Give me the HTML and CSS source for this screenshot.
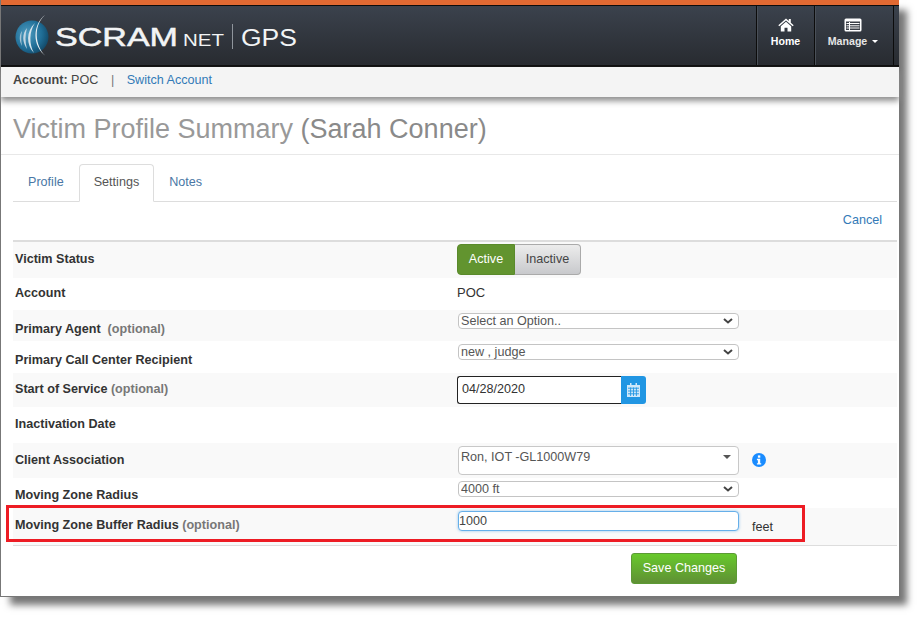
FILE: index.html
```html
<!DOCTYPE html>
<html lang="en">
<head>
<meta charset="utf-8">
<title>Victim Profile Summary</title>
<link rel="stylesheet" href="styles.css">
</head>
<body>
<div class="window">
  <header class="topbar">
    <svg class="logo" width="300" height="60" viewBox="0 0 300 60">
      <defs>
        <radialGradient id="orb" cx="0.35" cy="0.4" r="0.75">
          <stop offset="0" stop-color="#4f9cc0"/>
          <stop offset="0.6" stop-color="#1f6d96"/>
          <stop offset="1" stop-color="#0f3f5c"/>
        </radialGradient>
      </defs>
      <circle cx="32" cy="32" r="16.5" fill="url(#orb)"/>
      <path d="M45 10 C33 19 31 41 47 52 C37 45 31 23 45 10Z" fill="#e8eef2"/>
      <path d="M35 18 C26 26 26 40 34 48 C29 39 29 27 35 18Z" fill="#d6e4ec"/>
      <path d="M27 23 C22 29 22 37 27 44 C25 37 25 30 27 23Z" fill="#c2d6e2"/>
      <path d="M22 26 C19 30 19 36 22 41 C21 36 21 31 22 26Z" fill="#a9c6d6"/>
      <text class="logo-main" x="55" y="41" textLength="123" lengthAdjust="spacingAndGlyphs">SCRAM</text>
      <text class="logo-net" x="183" y="41" textLength="41" lengthAdjust="spacingAndGlyphs">NET</text>
      <rect x="232" y="19" width="1" height="25" fill="#8f959c"/>
      <text class="logo-gps" x="241" y="41" textLength="56" lengthAdjust="spacingAndGlyphs">GPS</text>
    </svg>
    <nav class="mainnav">
      <a class="navitem navhome">
        <svg width="16" height="14" viewBox="0 0 16 14"><path d="M8 0.5 L0.3 7.2 L1.3 8.3 L8 2.5 L14.7 8.3 L15.7 7.2 L12.8 4.7 V1 H10.8 V3 Z" fill="#fff"/><path d="M2.8 8.2 L8 3.8 L13.2 8.2 V13.5 H9.5 V9.8 H6.5 V13.5 H2.8Z" fill="#fff"/></svg>
        <span>Home</span>
      </a>
      <a class="navitem navmanage">
        <svg width="18" height="14" viewBox="0 0 18 14"><rect x="0.5" y="0.5" width="17" height="13" rx="1.5" fill="#fff"/><rect x="2" y="3.5" width="14" height="8.5" fill="#3a3f47"/><path d="M2.5 5.5H15.5M2.5 7.8H15.5M2.5 10H15.5M5.5 4V12" stroke="#fff" stroke-width="1"/></svg>
        <span>Manage <i class="caret"></i></span>
      </a>
    </nav>
  </header>
  <div class="accountbar">
    <b>Account:</b> POC <span class="pipe">|</span> <a>Switch Account</a>
  </div>
  <h1 class="pagetitle">Victim Profile Summary <small>(Sarah Conner)</small></h1>
  <main class="content">
    <ul class="tabs">
      <li><a>Profile</a></li>
      <li class="active"><a>Settings</a></li>
      <li><a>Notes</a></li>
    </ul>
    <div class="cancelrow"><a>Cancel</a></div>
    <div class="formtable">
      <div class="row row-status">
        <label>Victim Status</label>
        <div class="btngroup"><span class="seg seg-on">Active</span><span class="seg seg-off">Inactive</span></div>
      </div>
      <div class="row row-account">
        <label>Account</label>
        <div class="value">POC</div>
      </div>
      <div class="row row-agent">
        <label>Primary Agent <em>&nbsp;(optional)</em></label>
        <select class="sel"><option>Select an Option..</option></select>
      </div>
      <div class="row row-call">
        <label>Primary Call Center Recipient</label>
        <select class="sel"><option>new , judge</option></select>
      </div>
      <div class="row row-start">
        <label>Start of Service <em>(optional)</em></label>
        <div class="dategroup">
          <input class="dateinput" type="text" value="04/28/2020">
          <span class="dateaddon">
            <svg width="13" height="14" viewBox="0 0 13 14"><path d="M3 0h1.5v2.5H3zM8.5 0H10v2.5H8.5z" fill="#cfe8fa"/><path d="M0 2h13v12H0z" fill="#cfe8fa"/><path d="M1 5.2h11M1 8h11M1 10.8h11M3.6 4.5V13M6.5 4.5V13M9.4 4.5V13" stroke="#2196e3" stroke-width="0.9"/></svg>
          </span>
        </div>
      </div>
      <div class="row row-inact">
        <label>Inactivation Date</label>
      </div>
      <div class="row row-client">
        <label>Client Association</label>
        <div class="combo"><span>Ron, IOT -GL1000W79</span><i class="combocaret"></i></div>
        <svg class="info" width="14" height="14" viewBox="0 0 14 14"><circle cx="7" cy="7" r="7" fill="#1a8cff"/><rect x="5.9" y="2.4" width="2.4" height="2.3" fill="#fff"/><path d="M4.9 5.8H8.2V10.2H9.2V11.6H4.9V10.2H5.9V7.2H4.9Z" fill="#fff"/></svg>
      </div>
      <div class="row row-zone">
        <label>Moving Zone Radius</label>
        <select class="sel"><option>4000 ft</option></select>
      </div>
      <div class="row row-buffer">
        <label>Moving Zone Buffer Radius <em>(optional)</em></label>
        <input class="bufferinput" type="text" value="1000">
        <span class="unit">feet</span>
      </div>
    </div>
    <div class="actions"><button class="save" type="button">Save Changes</button></div>
  </main>
  <div class="highlight"></div>
</div>
</body>
</html>
```
FILE: styles.css
```css
* { box-sizing: border-box; }
html, body { margin: 0; padding: 0; background: #fff; }
body { width: 919px; height: 617px; overflow: hidden; font-family: "Liberation Sans", Arial, sans-serif; font-size: 12.6px; color: #333; }
a { color: #337ab7; }

.window { position: relative; width: 899px; height: 597px; background: #fff; border-left: 1px solid #777; border-bottom: 1px solid #777; box-shadow: 9px 9px 7px -1px #777; }

.topbar { height: 67px; display: flex; justify-content: space-between; border-top: 5px solid #e26a33; border-bottom: 2px solid #0c0c0c; background: linear-gradient(#0c0c0c 0, #0c0c0c 1px, #3b424d 1px, #282b30 100%); }
.logo { display: block; margin-left: -1px; margin-top: 0; }
.logo text { fill: #f2f4f5; font-family: "Liberation Sans", Arial, sans-serif; }
.logo-main { font-size: 25px; font-weight: 400; stroke: #f2f4f5; stroke-width: 0.5px; }
.logo-net { font-size: 16px; fill: #d5d9dc; }
.logo-gps { font-size: 23px; fill: #dfe2e4; }
.mainnav { display: flex; padding-top: 1px; padding-right: 5px; }
.navitem { display: flex; flex-direction: column; align-items: center; gap: 3px; padding-top: 12px; border-left: 1px solid #0c0c0c; box-shadow: inset 1px 0 0 #4a5058; color: #fff; font-size: 10.6px; font-weight: 700; }
.navhome { width: 58px; }
.navmanage { width: 80px; border-right: 1px solid #0c0c0c; color: #e6e6e6; padding-right: 2px; }
.caret { display: inline-block; width: 0; height: 0; margin-left: 2px; vertical-align: 2px; border-top: 3px solid #fff; border-left: 3px solid transparent; border-right: 3px solid transparent; }

.accountbar { height: 30px; padding: 5px 0 0 12px; background: #f4f4f4; font-size: 12.6px; line-height: 16px; color: #444; box-shadow: 0 4px 6px #8f8f8f; position: relative; }
.accountbar b { color: #444; }
.pipe { margin: 0 9px 0 9px; color: #777; }

.pagetitle { margin: 0; height: 58px; padding: 16px 0 0 12px; border-bottom: 1px solid #e8e8e8; font-size: 27px; line-height: 32px; font-weight: 400; color: #999; }
.pagetitle small { font-size: 27px; color: #8a8a8a; }

.content { padding: 0 2px 0 12px; }
.tabs { list-style: none; margin: 9px 0 0; padding: 0; height: 38px; display: flex; border-bottom: 1px solid #ddd; font-size: 12.6px; }
.tabs li { height: 38px; }
.tabs a { display: block; height: 38px; padding: 9px 14px; line-height: 16px; border: 1px solid transparent; border-radius: 4px 4px 0 0; color: #4a77a5; }
.tabs .active a { color: #555; border-color: #ddd #ddd #fff; background: #fff; }

.cancelrow { height: 38px; padding: 10px 15px 0 0; text-align: right; line-height: 16px; }

.formtable { border-top: 2px solid #ddd; border-bottom: 1px solid #ddd; }
.row { display: flex; align-items: flex-start; padding-left: 2px; }
.row:nth-child(odd) { background: #f9f9f9; }
.row label { width: 442px; flex: none; font-weight: 700; color: #333; line-height: 16px; }
.row em { font-style: normal; color: #777; }
.row-status { height: 36px; padding-top: 2px; }
.row-status label { margin-top: 7px; }
.row-account { height: 32px; }
.row-account label { margin-top: 7px; }
.value { margin-top: 7px; line-height: 16px; font-size: 13px; }
.row-agent { height: 31px; padding-top: 3px; }
.row-agent label { margin-top: 8px; }
.row-call { height: 32px; padding-top: 3px; }
.row-call label { margin-top: 8px; }
.row-start { height: 34px; padding-top: 3px; }
.row-start label { margin-top: 5px; }
.row-inact { height: 36px; }
.row-inact label { margin-top: 9px; }
.row-client { height: 35px; padding-top: 3px; }
.row-client label { margin-top: 6px; }
.row-zone { height: 30px; padding-top: 3px; }
.row-zone label { margin-top: 6px; }
.row-buffer { height: 37px; padding-top: 3px; }
.row-buffer label { margin-top: 6px; }

.btngroup { display: flex; height: 31px; }
.seg { display: block; height: 31px; line-height: 28px; text-align: center; font-size: 12.6px; }
.seg-on { width: 58px; color: #fff; background: #62942f; border: 1px solid #5a8a2b; border-radius: 4px 0 0 4px; }
.seg-off { width: 66px; color: #444; background: linear-gradient(#ececec, #c8c9cc); border: 1px solid #aaa; border-left: 0; border-radius: 0 4px 4px 0; }

.sel { display: block; appearance: none; -webkit-appearance: none; width: 281px; height: 16px; margin-left: 1px; padding: 0 20px 0 2px; background: #fff url("data:image/svg+xml,%3Csvg xmlns='http://www.w3.org/2000/svg' width='10' height='6'%3E%3Cpath d='M1 1l4 3.5L9 1' fill='none' stroke='%23444' stroke-width='2'/%3E%3C/svg%3E") no-repeat right 5px center; border: 1px solid #c4c4c4; border-radius: 4px; font-family: "Liberation Sans", Arial, sans-serif; font-size: 12.6px; line-height: 14px; color: #555; }

.dategroup { display: flex; height: 28px; }
.dateinput { width: 164px; height: 28px; padding: 0 4px 2px; border: 1px solid #222; border-right: 0; border-radius: 3px 0 0 3px; font-family: "Liberation Sans", Arial, sans-serif; font-size: 12.6px; color: #333; background: #fff; outline: 0; }
.dateaddon { width: 25px; height: 28px; display: flex; align-items: center; justify-content: center; background: #2196e3; border-radius: 0 3px 3px 0; }

.combo { position: relative; width: 281px; height: 29px; margin-left: 1px; padding: 2px 0 0 2px; background: #fff; border: 1px solid #c8c8c8; border-radius: 4px; line-height: 16px; color: #555; }
.combocaret { position: absolute; right: 7px; top: 8px; width: 0; height: 0; border-top: 4px solid #555; border-left: 4px solid transparent; border-right: 4px solid transparent; }
.info { margin: 7px 0 0 13px; }

.bufferinput { width: 281px; height: 20px; margin-left: 1px; padding: 0; background: #fff; border: 1px solid #66afe9; border-radius: 4px; box-shadow: 0 0 3px rgba(102, 175, 233, .7); font-family: "Liberation Sans", Arial, sans-serif; font-size: 12.6px; color: #444; outline: 0; }
.unit { margin: 8px 0 0 13px; line-height: 16px; font-size: 12.6px; }

.actions { display: flex; justify-content: flex-end; padding: 7px 160px 0 0; }
.save { width: 106px; height: 31px; padding: 0 0 2px; background: linear-gradient(#68c92c, #5f9034); border: 1px solid #5c9a35; border-radius: 3px; color: #fff; font-family: "Liberation Sans", Arial, sans-serif; font-size: 12.6px; }

.highlight { position: absolute; left: 5px; top: 505px; width: 799px; height: 37px; border: 3px solid #ed1c24; }
```
